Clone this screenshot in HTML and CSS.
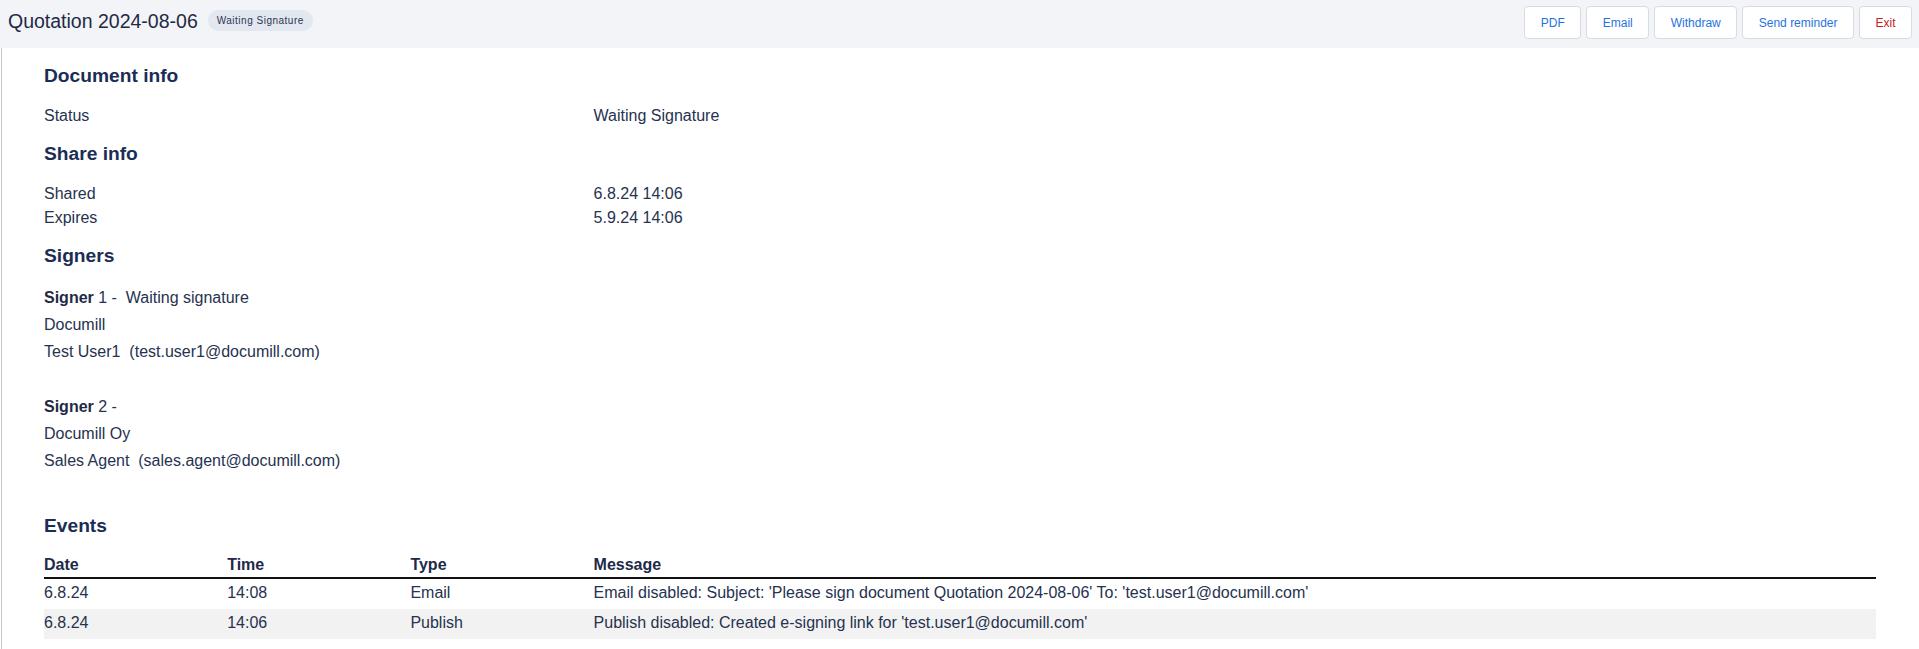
FILE: index.html
```html
<!DOCTYPE html>
<html lang="en">
<head>
    <meta charset="UTF-8">
    <title>Quotation 2024-08-06</title>
    <link rel="stylesheet" href="styles.css">
</head>
<body>
    <div class="topbar">
        <div class="doc-title">
            <h1>Quotation 2024-08-06</h1>
            <span class="badge">Waiting Signature</span>
        </div>
        <div class="actions">
            <button>PDF</button>
            <button>Email</button>
            <button>Withdraw</button>
            <button>Send reminder</button>
            <button class="exit">Exit</button>
        </div>
    </div>

    <div class="content">
        <h3>Document info</h3>
        <div class="info-grid">
            <div>Status</div>
            <div>Waiting Signature</div>
        </div>

        <h3>Share info</h3>
        <div class="info-grid">
            <div>Shared</div>
            <div>6.8.24 14:06</div>
            <div>Expires</div>
            <div>5.9.24 14:06</div>
        </div>

        <h3>Signers</h3>
        <div class="signer">
            <div><b>Signer</b> 1 -&nbsp; Waiting signature</div>
            <div>Documill</div>
            <div>Test User1 &nbsp;(test.user1@documill.com)</div>
        </div>
        <div class="signer">
            <div><b>Signer</b> 2 -</div>
            <div>Documill Oy</div>
            <div>Sales Agent &nbsp;(sales.agent@documill.com)</div>
        </div>

        <h3 class="events-title">Events</h3>
        <table class="events">
            <thead>
                <tr>
                    <th class="col-short">Date</th>
                    <th class="col-short">Time</th>
                    <th class="col-short">Type</th>
                    <th>Message</th>
                </tr>
            </thead>
            <tbody>
                <tr>
                    <td>6.8.24</td>
                    <td>14:08</td>
                    <td>Email</td>
                    <td>Email disabled: Subject: 'Please sign document Quotation 2024-08-06' To: 'test.user1@documill.com'</td>
                </tr>
                <tr>
                    <td>6.8.24</td>
                    <td>14:06</td>
                    <td>Publish</td>
                    <td>Publish disabled: Created e-signing link for 'test.user1@documill.com'</td>
                </tr>
            </tbody>
        </table>
    </div>
</body>
</html>
```

FILE: styles.css
```css
body {
    font-family: 'Liberation Sans', Arial, sans-serif;
    margin: 0;
    color: #26324f;
    background: #fff;
}
.topbar {
    display: flex;
    justify-content: space-between;
    align-items: flex-start;
    height: 48px;
    box-sizing: border-box;
    padding: 6px 7px 0 8px;
    background-color: #f3f4f8;
}
.doc-title {
    display: flex;
    align-items: center;
    padding-top: 2.5px;
}
.doc-title h1 {
    margin: 0;
    font-size: 19.5px;
    font-weight: normal;
    line-height: 24px;
    color: #1f2a44;
}
.badge {
    margin-left: 10px;
    height: 21px;
    line-height: 21px;
    padding: 0 9px;
    border-radius: 11px;
    background-color: #e3e7ef;
    color: #2b3553;
    font-size: 10px;
    letter-spacing: 0.5px;
}
.actions {
    display: flex;
    gap: 5px;
}
.actions button {
    height: 33px;
    padding: 0 15.5px;
    border: 1px solid #d7dbe4;
    border-radius: 4px;
    background-color: #fff;
    color: #1f74e0;
    font-family: inherit;
    font-size: 12px;
    cursor: pointer;
}
.actions .exit {
    color: #c5221f;
}
.content {
    margin-left: 1px;
    border-left: 1px solid #c8c8c8;
    padding: 2px 43px 0 42px;
    min-height: 600px;
}
h3 {
    margin: 14px 0 17px;
    font-size: 19.2px;
    line-height: 23px;
    color: #1b2d55;
}
.info-grid {
    display: grid;
    grid-template-columns: 30% 70%;
    font-size: 16px;
    line-height: 24px;
}
.signer {
    font-size: 16px;
    line-height: 27px;
    padding-bottom: 28px;
}
.signer + .signer {
    padding-bottom: 26px;
}
.signer b {
    color: #1f2a44;
}
/* events table */
.events-title {
    margin-bottom: 14px;
}
.events {
    width: 100%;
    border-collapse: collapse;
    table-layout: fixed;
    font-size: 16px;
    line-height: 24px;
}
.events .col-short {
    width: 10%;
}
.events th {
    text-align: left;
    padding: 2px 0 0;
    border-bottom: 2px solid #111;
    color: #1e2a4a;
}
.events td {
    padding: 2px 0 4px;
}
.events tbody tr:nth-child(2) {
    background-color: #f2f2f2;
}
```
